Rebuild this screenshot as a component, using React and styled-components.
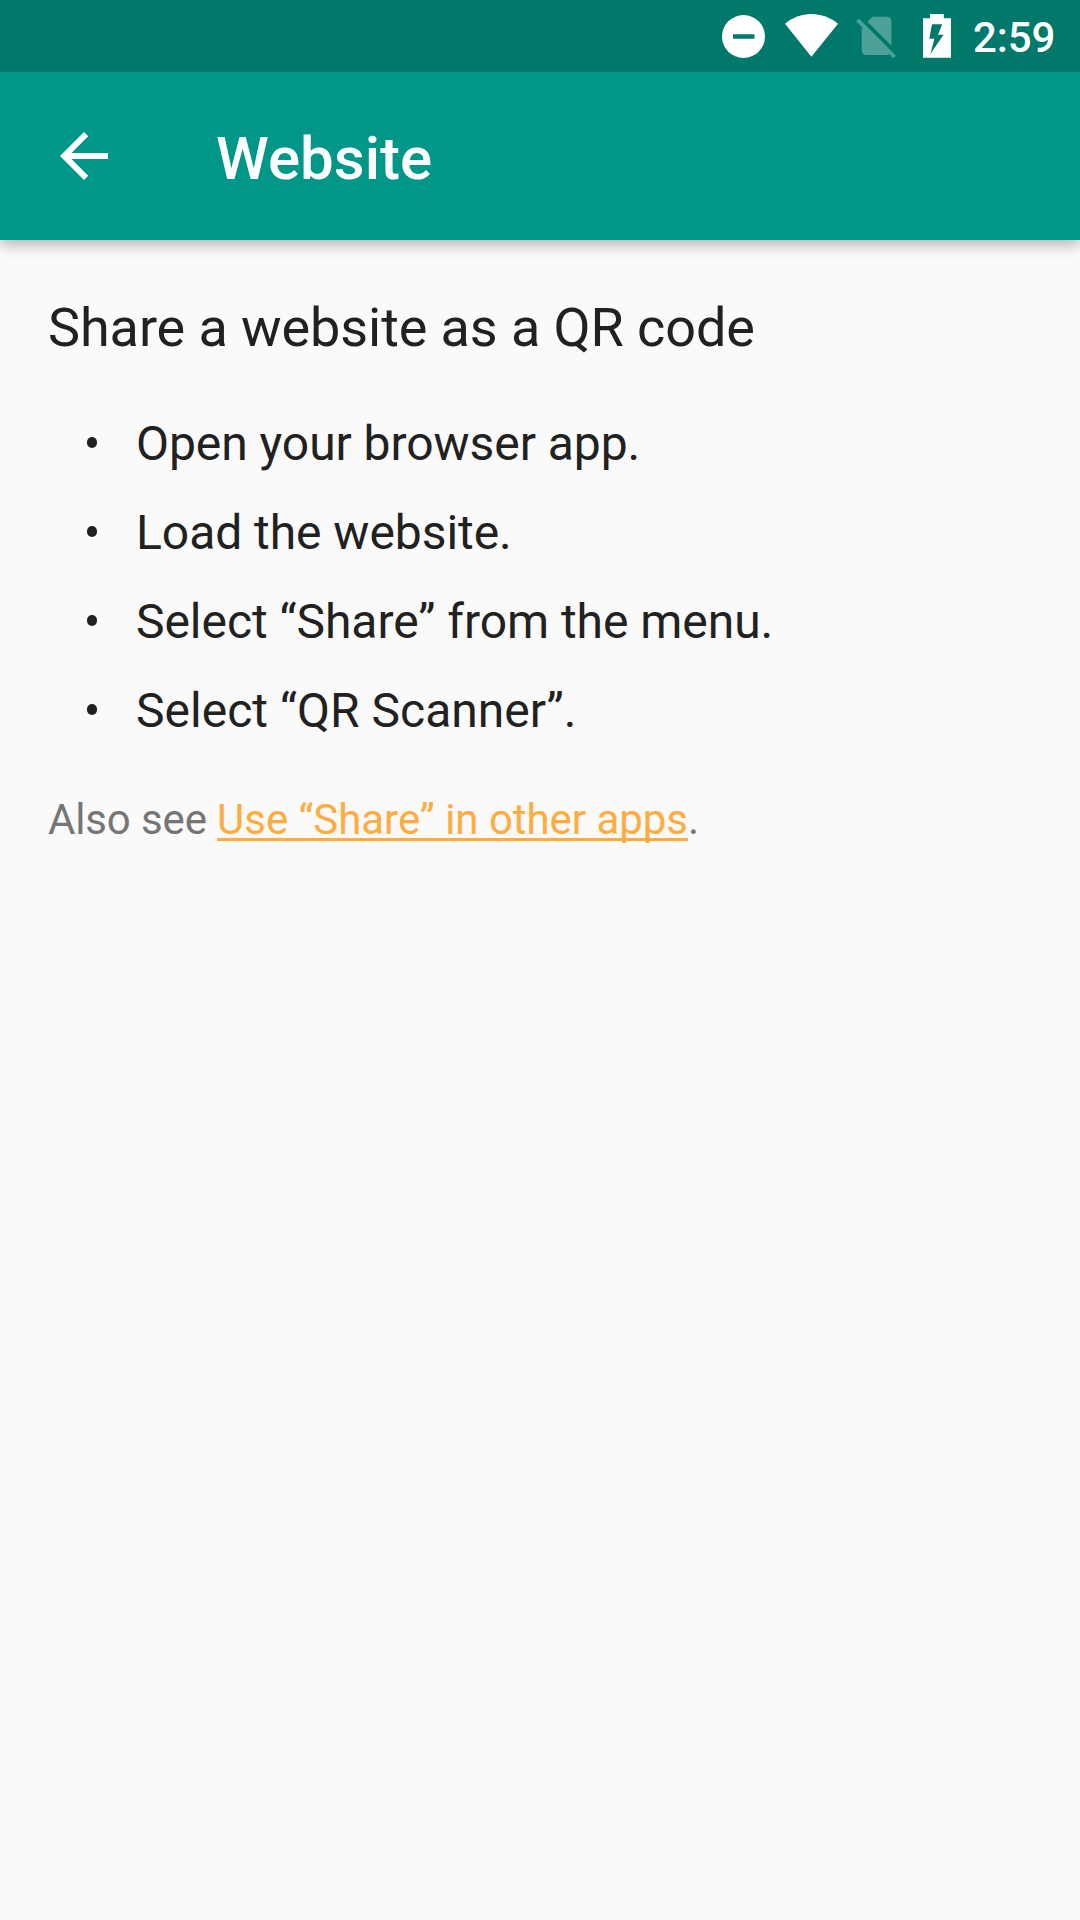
import React from "react";
import styled, { createGlobalStyle } from "styled-components";

const GlobalStyle = createGlobalStyle`
  * { box-sizing: border-box; }
  body {
    margin: 0;
    background: #fafafa;
    font-family: Roboto, "Noto Sans", sans-serif;
  }
`;

const Screen = styled.div`
  display: flex;
  flex-direction: column;
  width: 1080px;
  height: 1920px;
  background: #fafafa;
  color: #212121;
  overflow: hidden;
`;

const StatusBar = styled.header`
  display: flex;
  flex: none;
  align-items: flex-start;
  justify-content: flex-end;
  z-index: 1;
  height: 72px;
  padding-right: 24px;
  background: #00796b;
  color: #fff;
`;

const StatusIcon = styled.svg`
  display: block;
  flex: none;
  width: ${(p) => p.$width}px;
  height: 72px;
  fill: currentColor;
  opacity: ${(p) => (p.$dim ? 0.3 : 1)};
`;

const Clock = styled.time`
  width: 84px;
  padding: 13px 0 0 1px;
  font-size: 42px;
  font-weight: 500;
  letter-spacing: -0.1px;
  line-height: 50px;
  white-space: nowrap;
`;

const Toolbar = styled.nav`
  display: flex;
  flex: none;
  align-items: center;
  gap: 96px;
  height: 168px;
  padding-left: 48px;
  background: #009688;
  color: #fff;
  box-shadow: 0 5px 13px rgba(0, 0, 0, 0.28);
`;

const BackButton = styled.button`
  display: flex;
  padding: 0;
  border: 0;
  background: none;
  color: inherit;
`;

const BackIcon = styled.svg`
  width: 72px;
  height: 72px;
  fill: currentColor;
`;

const Title = styled.h1`
  margin: 0;
  padding-top: 5px;
  font-size: 60px;
  font-weight: 500;
  line-height: 71px;
`;

const Content = styled.main`
  display: flex;
  flex-direction: column;
  padding: 56px 48px 0;
`;

const Heading = styled.h2`
  margin: 0 0 39px;
  font-size: 54px;
  font-weight: 400;
  letter-spacing: -0.09px;
  line-height: 64px;
`;

const Steps = styled.ul`
  margin: 0 0 40px;
  padding: 0;
  list-style: none;
`;

const Step = styled.li`
  display: grid;
  grid-template-columns: 88px 1fr;
  font-size: 48px;
  letter-spacing: ${(p) => p.$tracking}px;
  line-height: 89px;
`;

const Bullet = styled.span`
  align-self: center;
  justify-self: start;
  width: 10px;
  height: 11px;
  margin: 0 0 2px 39px;
  border-radius: 5px;
  background: currentColor;
`;

const Footnote = styled.p`
  margin: 0;
  color: #757575;
  font-size: 42px;
  letter-spacing: -0.14px;
  line-height: 50px;
`;

const Link = styled.a`
  color: #ffab40;
  letter-spacing: -0.04px;
  text-decoration: underline;
  text-decoration-thickness: 3px;
  text-decoration-skip-ink: none;
  text-underline-offset: 4px;
`;

const steps = [
  { text: "Open your browser app.", tracking: -0.06 },
  { text: "Load the website.", tracking: -0.05 },
  { text: "Select “Share” from the menu.", tracking: -0.04 },
  { text: "Select “QR Scanner”.", tracking: 0.02 },
];

export default function App() {
  return (
    <>
      <GlobalStyle />
      <Screen>
        <StatusBar>
          <StatusIcon $width={63} viewBox="717 0 63 72">
            <path
              fillRule="evenodd"
              d="M743.5 15a21.5 21.5 0 1 0 0 43a21.5 21.5 0 1 0 0-43zM733 34.2h21.5v4.6H733z"
            />
          </StatusIcon>
          <StatusIcon $width={71} viewBox="780 0 71 72">
            <path d="M785 23.8C792.5 17.5 801.5 14 811.4 14S830.5 17.5 838 23.8L811.4 56.8z" />
          </StatusIcon>
          <StatusIcon $width={66} viewBox="851 0 66 72" $dim>
            <path
              transform="translate(851.1 10.3) scale(2.125)"
              d="M18.99 5c0-1.1-.89-2-1.99-2h-7L7.66 5.34 19 16.68 18.99 5zM3.65 3.88L2.38 5.15 5 7.77V19c0 1.1.9 2 2 2h10.01c.35 0 .67-.1.96-.26l1.88 1.88 1.27-1.27L3.65 3.88z"
            />
          </StatusIcon>
          <StatusIcon $width={55} viewBox="917 0 55 72">
            <path
              fillRule="evenodd"
              d="M930 14h13.8v4.2H951v39.5h-28V18.2h7zM932 24.3h10.2l-4.1 10.4h5.4l-13.1 19.3 4-15.3h-5.1z"
            />
          </StatusIcon>
          <Clock>2:59</Clock>
        </StatusBar>
        <Toolbar>
          <BackButton aria-label="Back">
            <BackIcon viewBox="0 0 24 24">
              <path d="M20 11H7.83l5.59-5.59L12 4l-8 8 8 8 1.41-1.41L7.83 13H20v-2z" />
            </BackIcon>
          </BackButton>
          <Title>Website</Title>
        </Toolbar>
        <Content>
          <Heading>Share a website as a QR code</Heading>
          <Steps>
            {steps.map(({ text, tracking }) => (
              <Step key={text} $tracking={tracking}>
                <Bullet />
                <span>{text}</span>
              </Step>
            ))}
          </Steps>
          <Footnote>
            Also see <Link>Use “Share” in other apps</Link>.
          </Footnote>
        </Content>
      </Screen>
    </>
  );
}
